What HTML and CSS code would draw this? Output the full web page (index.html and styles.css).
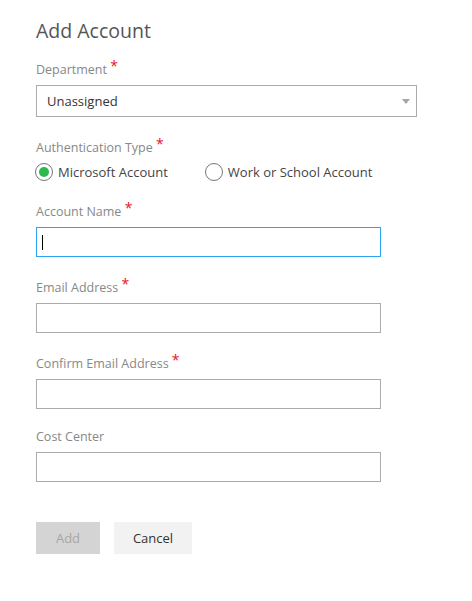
FILE: index.html
```html
<!DOCTYPE html>
<html lang="en">
<head>
<meta charset="utf-8">
<title>Add Account</title>
<link rel="stylesheet" href="styles.css">
</head>
<body>
<main class="panel">
  <h1 class="title">Add Account</h1>

  <div class="field first">
    <div class="label req">Department <span class="star">*</span></div>
    <div class="select">
      <span class="select-text">Unassigned</span>
      <svg class="arrow" width="8" height="5" viewBox="0 0 8 5"><path d="M0 0H8L4 5Z" fill="#a6a6a6"/></svg>
    </div>
  </div>

  <div class="field">
    <div class="label req">Authentication Type <span class="star">*</span></div>
    <div class="radios">
      <div class="radio checked"><span class="circle"><span class="dot"></span></span><span class="radio-text">Microsoft Account</span></div>
      <div class="radio"><span class="circle"></span><span class="radio-text">Work or School Account</span></div>
    </div>
  </div>

  <div class="field">
    <div class="label req">Account Name <span class="star">*</span></div>
    <div class="input focused"><span class="caret"></span></div>
  </div>

  <div class="field">
    <div class="label req">Email Address <span class="star">*</span></div>
    <div class="input"></div>
  </div>

  <div class="field">
    <div class="label req">Confirm Email Address <span class="star">*</span></div>
    <div class="input"></div>
  </div>

  <div class="field">
    <div class="label">Cost Center</div>
    <div class="input"></div>
  </div>

  <div class="actions">
    <button class="btn btn-disabled">Add</button>
    <button class="btn btn-default">Cancel</button>
  </div>
</main>
</body>
</html>
```

FILE: styles.css
```css
html, body {
  margin: 0;
  padding: 0;
  background: #ffffff;
}

body {
  font-family: "Open Sans", "Noto Sans", sans-serif;
  color: #333333;
}

.panel {
  padding: 17px 0 0 36px;
  display: flex;
  flex-direction: column;
}

.title {
  margin: 0;
  font-size: 19.5px;
  font-weight: 400;
  line-height: 28px;
  color: #555555;
}

.field {
  display: flex;
  flex-direction: column;
  margin-top: 17px;
}

.field.first {
  margin-top: 11px;
}

.label {
  font-size: 12.5px;
  line-height: 20px;
  height: 20px;
  color: #888888;
  margin-bottom: 5px;
  padding-top: 1px;
}

.label.req {
  padding-top: 4px;
}

.star {
  color: #e81123;
  font-size: 14px;
  line-height: 0;
  position: relative;
  top: -3px;
}

.select {
  width: 381px;
  height: 32px;
  box-sizing: border-box;
  border: 1px solid #ababab;
  display: flex;
  align-items: center;
  justify-content: space-between;
  padding: 0 6px 0 10px;
}

.select-text {
  font-size: 13px;
  color: #333333;
}

.arrow {
  display: block;
}

.radios {
  display: flex;
  align-items: center;
  gap: 38px;
  margin-top: -3px;
  margin-bottom: -3px;
  height: 24px;
}

.radio {
  display: flex;
  align-items: center;
  gap: 5px;
}

.circle {
  width: 18px;
  height: 18px;
  box-sizing: border-box;
  border: 1px solid #767676;
  border-radius: 50%;
  display: flex;
  align-items: center;
  justify-content: center;
  margin-left: -1px;
}

.dot {
  width: 10px;
  height: 10px;
  border-radius: 50%;
  background: #2db84d;
}

.radio-text {
  font-size: 13px;
  color: #444444;
}

.input {
  width: 345px;
  height: 30px;
  box-sizing: border-box;
  border: 1px solid #ababab;
  display: flex;
  align-items: center;
  padding-left: 5px;
}

.input.focused {
  border-color: #2aa5f5;
}

.caret {
  width: 1px;
  height: 15px;
  background: #000000;
}

.actions {
  display: flex;
  gap: 14px;
  margin-top: 40px;
}

.btn {
  height: 32px;
  border: none;
  font-family: inherit;
  font-size: 13px;
  padding: 0;
}

.btn-disabled {
  width: 64px;
  background: #d4d4d4;
  color: #a6a6a6;
}

.btn-default {
  width: 78px;
  background: #f2f2f2;
  color: #333333;
}
```
